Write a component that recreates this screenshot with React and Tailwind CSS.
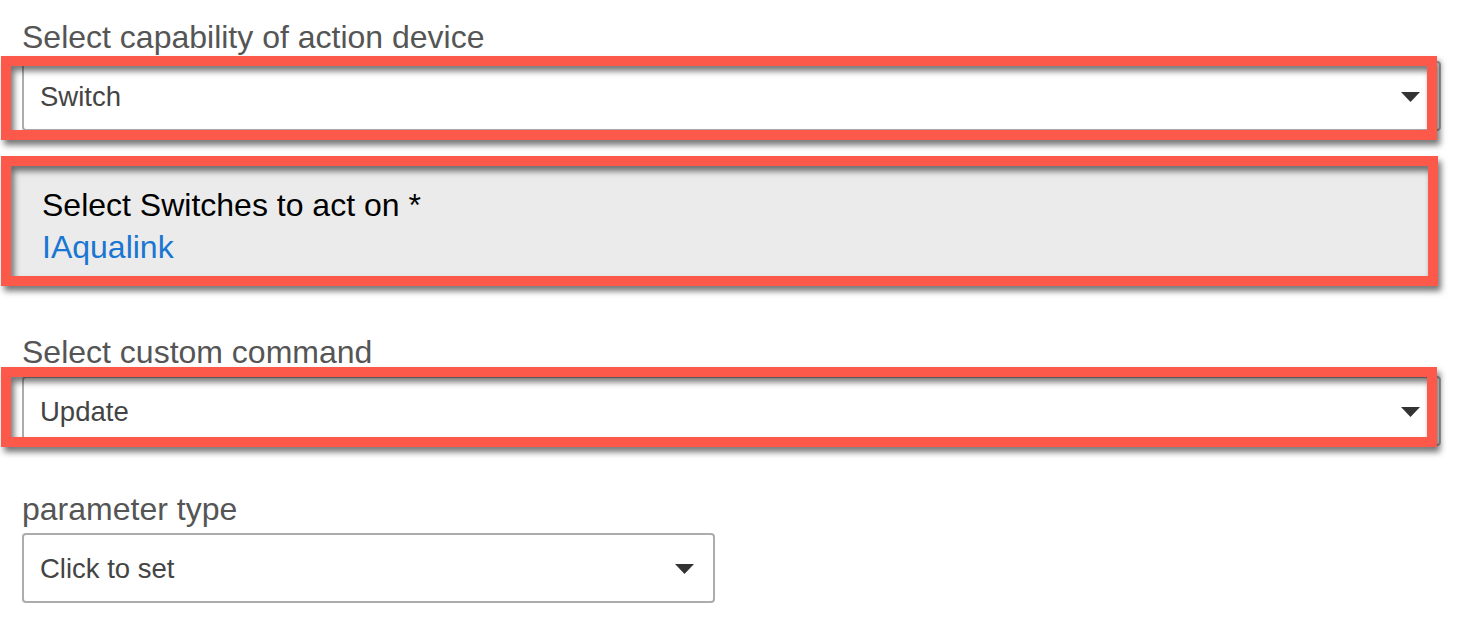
import React from 'react';

const Arrow = () => (
  <svg width="19" height="10" viewBox="0 0 19 10" className="shrink-0">
    <polygon points="0,0 19,0 9.5,10" fill="#333" />
  </svg>
);

// red annotation frame drawn over a field
const Mark = ({ className }) => (
  <div
    className={`pointer-events-none absolute border-[10px] border-[#fc594b] [filter:drop-shadow(3px_5px_3px_rgba(0,0,0,0.55))] ${className}`}
  />
);

const SelectBox = ({ value, className = '' }) => (
  <div
    className={`flex h-[70px] items-center justify-between rounded-[4px] border-2 border-[#acacac] bg-white pl-[16px] pr-[19px] pt-[2px] ${className}`}
  >
    <span className="text-[27.5px] text-[#444]">{value}</span>
    <Arrow />
  </div>
);

const Label = ({ children }) => (
  <div className="mb-[6px] text-[32px] leading-[36px] text-[#555]">{children}</div>
);

export default function App() {
  return (
    <div className="min-h-screen bg-white pl-[22px] pr-[29px] pt-[19px] font-['Liberation_Sans',Arial,sans-serif]">
      <Label>Select capability of action device</Label>
      <div className="relative">
        <SelectBox value="Switch" />
        <Mark className="-left-[21px] right-[4px] -top-[5px] -bottom-[9px]" />
      </div>

      <div className="relative -ml-[10px] mr-[9px] mt-[30px]">
        <div className="h-[120px] bg-[#ebebeb] pl-[30px] pt-[23px]">
          <div className="text-[32px] leading-[42px] text-black">Select Switches to act on *</div>
          <div className="text-[32px] leading-[42px] text-[#1976d2]">IAqualink</div>
        </div>
        <Mark className="-left-[11px] -right-[6px] -top-[5px] -bottom-[5px]" />
      </div>

      <div className="mt-[53px]">
        <Label>Select custom command</Label>
        <div className="relative">
          <SelectBox value="Update" />
          <Mark className="-left-[21px] right-[4px] -top-[9px] bottom-[-1px]" />
        </div>
      </div>

      <div className="mt-[45px]">
        <Label>parameter type</Label>
        <SelectBox value="Click to set" className="w-[693px]" />
      </div>
    </div>
  );
}
